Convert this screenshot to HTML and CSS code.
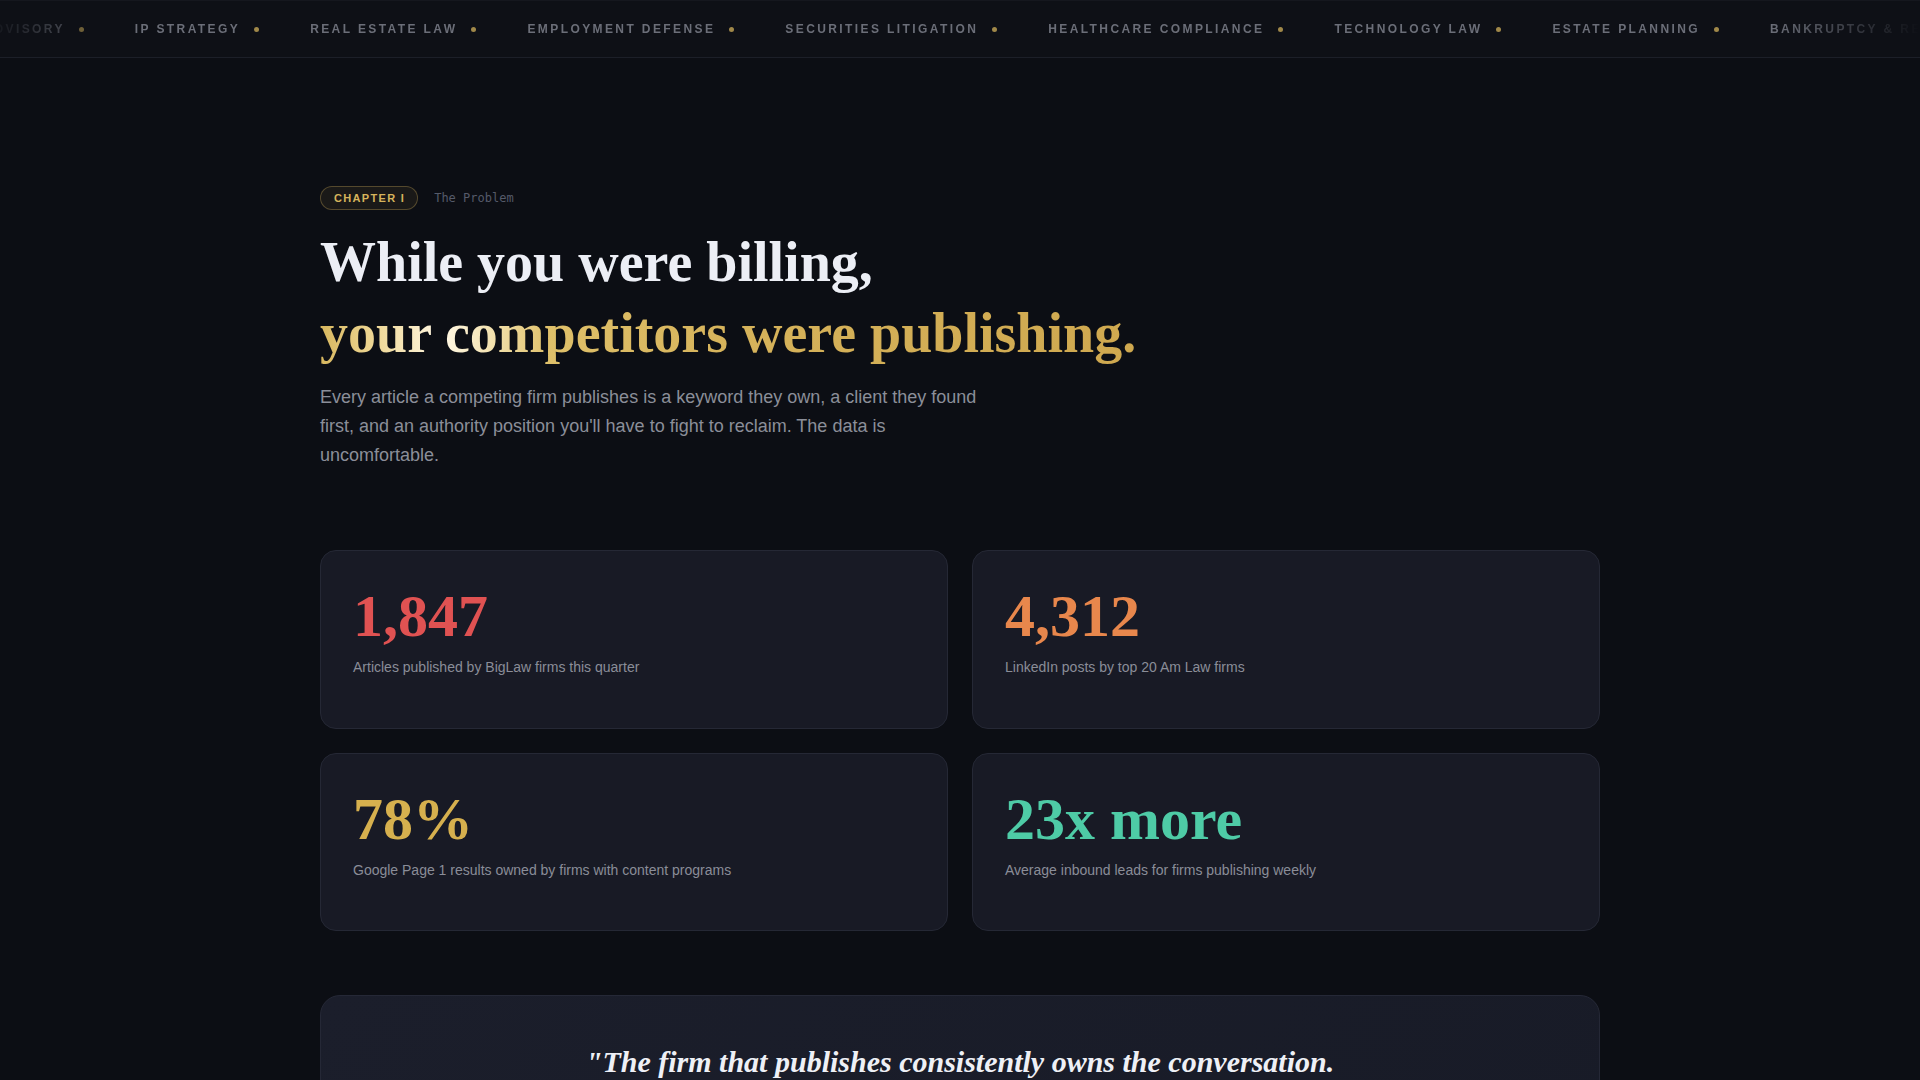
FILE: index.html
```html
<!DOCTYPE html>
<html lang="en">
<head>
<meta charset="utf-8">
<title>Chapter I — The Problem</title>
<link rel="stylesheet" href="styles.css">
</head>
<body>
  <header class="ticker">
    <div class="ticker-viewport">
      <div class="ticker-track">
        <div class="ticker-item"><span>M&amp;A Advisory</span><i class="dot"></i></div>
        <div class="ticker-item"><span>IP Strategy</span><i class="dot"></i></div>
        <div class="ticker-item"><span>Real Estate Law</span><i class="dot"></i></div>
        <div class="ticker-item"><span>Employment Defense</span><i class="dot"></i></div>
        <div class="ticker-item"><span>Securities Litigation</span><i class="dot"></i></div>
        <div class="ticker-item"><span>Healthcare Compliance</span><i class="dot"></i></div>
        <div class="ticker-item"><span>Technology Law</span><i class="dot"></i></div>
        <div class="ticker-item"><span>Estate Planning</span><i class="dot"></i></div>
        <div class="ticker-item"><span>Bankruptcy &amp; Restructuring</span><i class="dot"></i></div>
        <div class="ticker-item"><span>Corporate Governance</span><i class="dot"></i></div>
      </div>
    </div>
  </header>

  <main class="chapter">
    <div class="chapter-meta">
      <span class="badge">CHAPTER I</span>
      <span class="meta-label">The Problem</span>
    </div>

    <h1 class="headline">
      <span class="line-one">While you were billing,</span>
      <span class="line-two">your competitors were publishing.</span>
    </h1>

    <p class="lede">Every article a competing firm publishes is a keyword they own, a client they found first, and an authority position you'll have to fight to reclaim. The data is uncomfortable.</p>

    <section class="stats">
      <article class="stat-card">
        <div class="stat-value red">1,847</div>
        <div class="stat-label">Articles published by BigLaw firms this quarter</div>
      </article>
      <article class="stat-card">
        <div class="stat-value orange">4,312</div>
        <div class="stat-label">LinkedIn posts by top 20 Am Law firms</div>
      </article>
      <article class="stat-card">
        <div class="stat-value gold">78%</div>
        <div class="stat-label">Google Page 1 results owned by firms with content programs</div>
      </article>
      <article class="stat-card">
        <div class="stat-value teal">23x more</div>
        <div class="stat-label">Average inbound leads for firms publishing weekly</div>
      </article>
    </section>

    <blockquote class="quote-card">
      <p class="quote-text">"The firm that publishes consistently owns the conversation.<br>Everyone else is just listening."</p>
    </blockquote>
  </main>
</body>
</html>
```

FILE: styles.css
```css
html, body {
  margin: 0;
  padding: 0;
}

body {
  background: #0c0e14;
  color: #eceef5;
  font-family: "Liberation Sans", Arial, sans-serif;
  height: 1080px;
  overflow: hidden;
}

/* ---------- ticker ---------- */
.ticker {
  background: #0e1016;
  border-top: 1px solid #15171e;
  border-bottom: 1px solid #1c1f28;
  overflow: hidden;
}

.ticker-viewport {
  overflow: hidden;
  -webkit-mask-image: linear-gradient(90deg, rgba(0,0,0,0.1) 0, #000 130px, #000 calc(100% - 150px), transparent 100%);
  mask-image: linear-gradient(90deg, rgba(0,0,0,0.1) 0, #000 130px, #000 calc(100% - 150px), transparent 100%);
}

.ticker-track {
  display: flex;
  gap: 51px;
  width: max-content;
  padding: 19px 0;
  white-space: nowrap;
  transform: translateX(-56px);
}

.ticker-item {
  display: flex;
  align-items: center;
  gap: 14px;
  font-size: 12px;
  line-height: 18px;
  font-weight: 700;
  letter-spacing: 0.2em;
  text-transform: uppercase;
  color: #6b6e78;
}

.dot {
  display: block;
  width: 5px;
  height: 5px;
  border-radius: 50%;
  background: #a08849;
}

/* ---------- chapter ---------- */
.chapter {
  width: 1280px;
  margin: 0 auto;
  padding-top: 128px;
}

.chapter-meta {
  display: flex;
  align-items: center;
  gap: 16px;
}

.badge {
  display: flex;
  align-items: center;
  box-sizing: border-box;
  height: 24px;
  padding: 0 12px 0 13px;
  border: 1px solid rgba(212, 176, 90, 0.32);
  background: rgba(212, 176, 90, 0.07);
  border-radius: 999px;
  font-size: 11px;
  font-weight: 700;
  letter-spacing: 0.12em;
  color: #d6b45c;
}

.meta-label {
  font-family: "DejaVu Sans Mono", "Liberation Mono", monospace;
  font-size: 12px;
  color: #555a69;
}

.headline {
  margin: 17px 0 0;
  font-family: "Liberation Serif", "Times New Roman", serif;
  font-size: 56px;
  line-height: 1.26;
  font-weight: 700;
}

.line-one {
  display: block;
  color: #eceef5;
}

.line-two {
  display: inline-block;
  background: linear-gradient(90deg, #d8b75e 0%, #efd898 7%, #fff7e4 15%, #f3e2b0 21%, #dfc06a 28%, #d6b35b 50%, #cfa84f 100%);
  -webkit-background-clip: text;
  background-clip: text;
  color: transparent;
}

.lede {
  margin: 15px 0 0;
  max-width: 680px;
  font-size: 18px;
  line-height: 1.6;
  color: #8b8e99;
}

/* ---------- stats ---------- */
.stats {
  display: grid;
  grid-template-columns: 1fr 1fr;
  gap: 24px;
  margin-top: 81px;
}

.stat-card {
  background: #181a25;
  border: 1px solid #252835;
  border-radius: 16px;
  padding: 32px 32px 49px;
}

.stat-value {
  font-family: "Liberation Serif", "Times New Roman", serif;
  font-size: 60px;
  line-height: 1.1;
  font-weight: 700;
  margin-bottom: 7px;
}

.stat-value.red { color: #e05252; }
.stat-value.orange { color: #e8874c; }
.stat-value.gold { color: #d6b04e; }
.stat-value.teal { color: #4ecba6; }

.stat-label {
  font-size: 14px;
  line-height: 1.6;
  color: #8a8d98;
}

/* ---------- quote ---------- */
.quote-card {
  margin: 64px 0 0;
  padding: 48px;
  background: linear-gradient(135deg, #1b1e2b 0%, #181b27 100%);
  border: 1px solid #252836;
  border-radius: 20px;
  text-align: center;
}

.quote-text {
  margin: 0;
  font-family: "Liberation Serif", "Times New Roman", serif;
  font-style: italic;
  font-weight: 600;
  font-size: 30px;
  line-height: 1.2;
  color: #eef0f6;
}
```
